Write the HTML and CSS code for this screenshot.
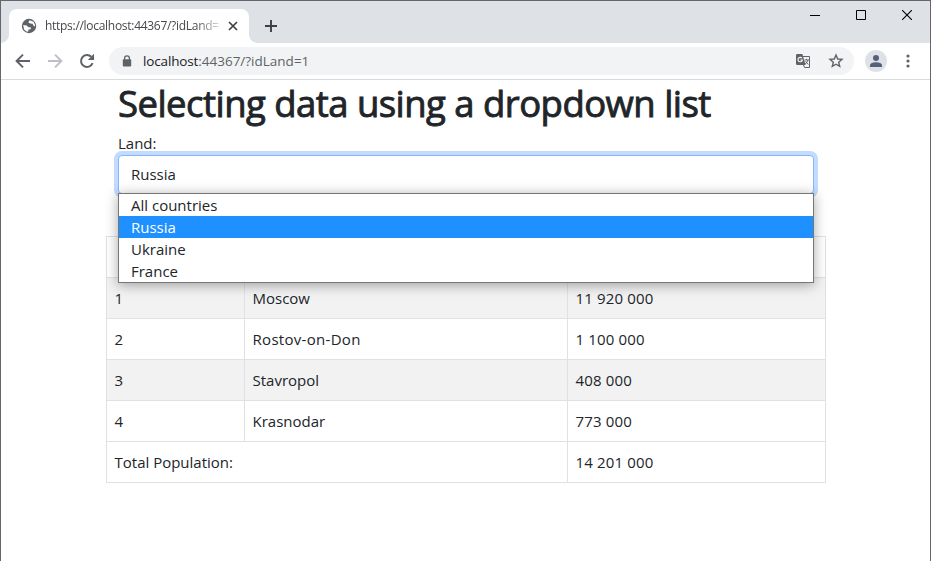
FILE: index.html
```html
<!DOCTYPE html>
<html lang="en">
<head>
<meta charset="utf-8">
<title>Selecting data using a dropdown list</title>
<link rel="stylesheet" href="styles.css">
</head>
<body>
<div class="window">
  <header class="titlebar">
    <div class="tab">
      <svg class="globe" width="16" height="16" viewBox="0 0 16 16"><circle cx="8" cy="8" r="7.2" fill="#5f6368"/><path d="M8.6 2.2 7.4 4.2 9 5.6 11.6 5.8 12.3 7.6 14 8.4 14 7 12.6 3.8ZM2.2 7 5.6 7.4 7.6 9.2 10 9.6 9.6 11.2 7.4 11.6 7.2 13.8 5 13.2 3 11.2Z" fill="#fff"/></svg>
      <span class="tab-title">https://localhost:44367/?idLand=</span>
      <svg class="tab-close" width="10" height="10" viewBox="0 0 10 10"><path d="M1 1 9 9M9 1 1 9" stroke="#3c4043" stroke-width="1.7"/></svg>
    </div>
    <svg class="new-tab" width="12" height="12" viewBox="0 0 12 12"><path d="M6 0V12M0 6H12" stroke="#3c4043" stroke-width="1.9"/></svg>
    <div class="controls">
      <svg width="10" height="11" viewBox="0 0 10 11"><path d="M0 5.5H10" stroke="#000"/></svg>
      <svg width="10" height="10" viewBox="0 0 10 10"><path d="M.5 .5H9.5V9.5H.5Z" fill="none" stroke="#000"/></svg>
      <svg width="10" height="10" viewBox="0 0 10 10"><path d="M0 0 10 10M10 0 0 10" stroke="#000" stroke-width="1.1"/></svg>
    </div>
  </header>
  <nav class="toolbar">
    <svg class="nav-icon" width="16" height="16" viewBox="0 0 16 16"><path d="M15 8H2M8 1.6 1.6 8 8 14.4" fill="none" stroke="#5f6368" stroke-width="2"/></svg>
    <svg class="nav-icon" width="16" height="16" viewBox="0 0 16 16"><path d="M1 8H14M8 1.6 14.4 8 8 14.4" fill="none" stroke="#bdc1c6" stroke-width="2"/></svg>
    <svg class="nav-icon" width="16" height="16" viewBox="0 0 16 16"><path d="M13.6 10.2A6 6 0 1 1 12.3 3.8" fill="none" stroke="#5f6368" stroke-width="2"/><path d="M15 .8V7H8.8Z" fill="#5f6368"/></svg>
    <div class="omnibox">
      <svg width="10" height="12" viewBox="0 0 10 12"><path d="M2.6 5V3.2a2.4 2.4 0 0 1 4.8 0V5" fill="none" stroke="#5f6368" stroke-width="1.3"/><rect x=".8" y="4.2" width="8.4" height="7.3" rx="1" fill="#5f6368"/></svg>
      <span class="url"><span class="host">localhost</span>:44367/?idLand=1</span>
      <svg class="translate" width="15" height="14" viewBox="0 0 15 14"><path d="M7 2.500H13.500V13.500H8.600L7.500 11" fill="none" stroke="#5f6368"/><path d="M1.200 0H6.400L9.600 11H1.200A1.200 1.200 0 0 1 0 9.800V1.200A1.200 1.200 0 0 1 1.200 0Z" fill="#5f6368"/><path d="M6 4.200A2.200 2.200 0 1 0 6.400 6H4.400" fill="none" stroke="#f1f3f4" stroke-width="1.200"/><path d="M8.500 6H13M10.500 4.800V6M12 6Q11.500 8.500 9 10M9.500 7.200 12.300 10.500" fill="none" stroke="#5f6368" stroke-width=".9"/></svg>
      <svg width="16" height="16" viewBox="0 0 16 16"><path d="M8 2 9.700 6 14 6.400 10.700 9.200 11.700 13.400 8 11.200 4.300 13.400 5.300 9.200 2 6.400 6.300 6Z" fill="none" stroke="#5f6368" stroke-width="1.400"/></svg>
    </div>
    <div class="avatar"><svg width="12" height="12" viewBox="0 0 12 12"><circle cx="6" cy="3" r="3" fill="#55607a"/><path d="M0 12V10.200C0 8 4 7.300 6 7.300S12 8 12 10.200V12Z" fill="#55607a"/></svg></div>
    <svg class="more" width="4" height="14" viewBox="0 0 4 14"><g fill="#5f6368"><circle cx="2" cy="2" r="1.600"/><circle cx="2" cy="7" r="1.600"/><circle cx="2" cy="12" r="1.600"/></g></svg>
  </nav>
  <main class="page">
    <div class="form">
      <h1>Selecting data using a dropdown list</h1>
      <label>Land:</label>
      <div class="select">Russia
        <ul class="menu">
          <li>All countries</li>
          <li class="active">Russia</li>
          <li>Ukraine</li>
          <li>France</li>
        </ul>
      </div>
    </div>
    <table>
      <colgroup><col class="c1"><col class="c2"><col class="c3"></colgroup>
      <thead><tr><th></th><th></th><th></th></tr></thead>
      <tbody>
        <tr class="odd"><td>1</td><td>Moscow</td><td class="num">11 920 000</td></tr>
        <tr><td>2</td><td class="wide">Rostov-on-Don</td><td class="num">1 100 000</td></tr>
        <tr class="odd"><td>3</td><td>Stavropol</td><td class="num">408 000</td></tr>
        <tr><td>4</td><td>Krasnodar</td><td class="num">773 000</td></tr>
        <tr><td colspan="2">Total Population:</td><td class="num">14 201 000</td></tr>
      </tbody>
    </table>
  </main>
</div>
</body>
</html>
```
FILE: styles.css
```css
* { box-sizing: border-box; }
body { margin: 0; font-family: "Open Sans", "Noto Sans", sans-serif; font-size: 15px; color: #212529; background: #fff; overflow: hidden; }
svg { display: block; flex: none; }
.window { width: 931px; height: 561px; border: 1px solid #65666a; border-bottom: 0; }
.titlebar { height: 42px; background: #dee1e6; display: flex; padding: 8px 18px 0 8px; }
.tab { position: relative; width: 240px; height: 34px; background: #fff; border-radius: 8px 8px 0 0; display: flex; align-items: center; padding: 0 11px 0 12px; }
.tab::before, .tab::after { content: ""; position: absolute; bottom: 0; width: 8px; height: 8px; }
.tab::before { left: -8px; background: radial-gradient(circle at 0 0, transparent 7.5px, #fff 8px); }
.tab::after { right: -8px; background: radial-gradient(circle at 100% 0, transparent 7.5px, #fff 8px); }
.tab-title { width: 176px; margin-left: 8px; white-space: nowrap; font-size: 12px; line-height: 18px; letter-spacing: -0.29px; color: #45484c; -webkit-mask-image: linear-gradient(90deg, #000 150px, transparent 180px); }
.tab-close { margin-left: auto; }
.new-tab { margin: 11px 0 0 16px; }
.controls { display: flex; gap: 36px; margin: 1px 0 0 auto; height: 10px; }
.toolbar { height: 37px; background: #fff; border-bottom: 1px solid #d9dadc; display: flex; align-items: center; padding: 0 20px 0 14px; }
.nav-icon { margin-right: 16px; }
.nav-icon + .nav-icon + .nav-icon { margin-right: 14px; }
.omnibox { width: 745px; height: 28px; border-radius: 14px; background: #f1f3f4; display: flex; align-items: center; padding: 0 10px 0 13px; }
.url { margin-left: 11px; font-size: 13.5px; letter-spacing: 0; color: #5f6368; }
.host { color: #202124; letter-spacing: -0.15px; }
.translate { margin: 0 17px 0 auto; }
.avatar { width: 22px; height: 22px; margin-left: 11px; border-radius: 50%; background: #dee1e6; display: flex; align-items: center; justify-content: center; }
.more { margin-left: auto; }
.page { padding-left: 105px; }
.form { width: 696px; margin-left: 12px; }
h1 { margin: 0 0 3px; height: 48px; font-size: 36.5px; font-weight: 400; line-height: 47px; letter-spacing: -0.54px; -webkit-text-stroke: 0.9px #212529; white-space: nowrap; }
label { display: block; height: 24px; line-height: 24px; }
.select { position: relative; height: 39px; border: 1px solid #86b7fe; border-radius: 4px; box-shadow: 0 0 0 4px #c2dbfe; padding: 0 12px; line-height: 37px; background: #fff; }
.menu { position: absolute; left: -1px; top: 37px; width: 696px; height: 90px; margin: 0; padding: 0; list-style: none; background: #fff; border: 1px solid #767676; box-shadow: 0 2px 12px rgba(0,0,0,.35); }
.menu li { height: 22px; line-height: 22px; padding-left: 12px; }
.menu .active { background: #1e90ff; color: #fff; }
table { width: 720px; margin-top: 42px; border-collapse: collapse; table-layout: fixed; }
.c1 { width: 138px; }
.c2 { width: 323px; }
th, td { height: 41px; padding: 0 7.5px; border: 1px solid #dee2e6; text-align: left; line-height: 24px; }
.num { letter-spacing: 0.15px; }
.wide { letter-spacing: 0.3px; }
.odd { background: #f2f2f2; }
```
